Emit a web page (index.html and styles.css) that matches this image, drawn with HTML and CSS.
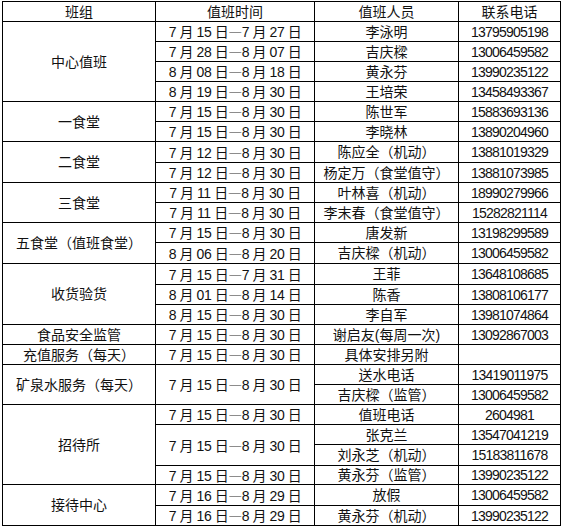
FILE: index.html
```html
<!DOCTYPE html>
<html lang="zh">
<head>
<meta charset="utf-8">
<title>值班表</title>
<link rel="stylesheet" href="styles.css">
</head>
<body>
<table class="duty">
<colgroup><col class="c1"><col class="c2"><col class="c3"><col class="c4"></colgroup>
<tr class="h20"><td>班组</td><td>值班时间</td><td>值班人员</td><td>联系电话</td></tr>
<tr class="h20"><td rowspan="4">中心值班</td><td class="d">7 月 15 日<span class="dash">—</span>7 月 27 日</td><td>李泳明</td><td class="p">13795905198</td></tr>
<tr class="h20"><td class="d">7 月 28 日<span class="dash">—</span>8 月 07 日</td><td>吉庆樑</td><td class="p">13006459582</td></tr>
<tr class="h20"><td class="d">8 月 08 日<span class="dash">—</span>8 月 18 日</td><td>黄永芬</td><td class="p">13990235122</td></tr>
<tr class="h20"><td class="d">8 月 19 日<span class="dash">—</span>8 月 30 日</td><td>王培荣</td><td class="p">13458493367</td></tr>
<tr class="h20"><td rowspan="2">一食堂</td><td class="d">7 月 15 日<span class="dash">—</span>8 月 30 日</td><td>陈世军</td><td class="p">15883693136</td></tr>
<tr class="h20"><td class="d">7 月 15 日<span class="dash">—</span>8 月 30 日</td><td>李晓林</td><td class="p">13890204960</td></tr>
<tr class="h21"><td rowspan="2">二食堂</td><td class="d">7 月 12 日<span class="dash">—</span>8 月 30 日</td><td>陈应全（机动）</td><td class="p">13881019329</td></tr>
<tr class="h20"><td class="d">7 月 12 日<span class="dash">—</span>8 月 30 日</td><td>杨定万（食堂值守）</td><td class="p">13881073985</td></tr>
<tr class="h20"><td rowspan="2">三食堂</td><td class="d">7 月 11 日<span class="dash">—</span>8 月 30 日</td><td>叶林喜（机动）</td><td class="p">18990279966</td></tr>
<tr class="h20"><td class="d">7 月 11 日<span class="dash">—</span>8 月 30 日</td><td>李末春（食堂值守）</td><td class="p">15282821114</td></tr>
<tr class="h20"><td rowspan="2">五食堂（值班食堂）</td><td class="d">7 月 15 日<span class="dash">—</span>8 月 30 日</td><td>唐发新</td><td class="p">13198299589</td></tr>
<tr class="h21"><td class="d">8 月 06 日<span class="dash">—</span>8 月 20 日</td><td>吉庆樑（机动）</td><td class="p">13006459582</td></tr>
<tr class="h21"><td rowspan="3">收货验货</td><td class="d">7 月 15 日<span class="dash">—</span>7 月 31 日</td><td>王菲</td><td class="p">13648108685</td></tr>
<tr class="h20"><td class="d">8 月 01 日<span class="dash">—</span>8 月 14 日</td><td>陈香</td><td class="p">13808106177</td></tr>
<tr class="h20"><td class="d">8 月 15 日<span class="dash">—</span>8 月 30 日</td><td>李自军</td><td class="p">13981074864</td></tr>
<tr class="h20"><td>食品安全监管</td><td class="d">7 月 15 日<span class="dash">—</span>8 月 30 日</td><td>谢启友(每周一次)</td><td class="p">13092867003</td></tr>
<tr class="h20"><td>充值服务（每天）</td><td class="d">7 月 15 日<span class="dash">—</span>8 月 30 日</td><td>具体安排另附</td><td class="p"></td></tr>
<tr class="h20"><td rowspan="2">矿泉水服务（每天）</td><td rowspan="2" class="d">7 月 15 日<span class="dash">—</span>8 月 30 日</td><td>送水电话</td><td class="p">13419011975</td></tr>
<tr class="h20"><td>吉庆樑（监管）</td><td class="p">13006459582</td></tr>
<tr class="h20"><td rowspan="4">招待所</td><td class="d">7 月 15 日<span class="dash">—</span>8 月 30 日</td><td>值班电话</td><td class="p">2604981</td></tr>
<tr class="h20"><td rowspan="2" class="d">7 月 15 日<span class="dash">—</span>8 月 30 日</td><td>张克兰</td><td class="p">13547041219</td></tr>
<tr class="h21"><td>刘永芝（机动）</td><td class="p">15183811678</td></tr>
<tr class="h19"><td class="d">7 月 15 日<span class="dash">—</span>8 月 30 日</td><td>黄永芬（监管）</td><td class="p">13990235122</td></tr>
<tr class="h21"><td rowspan="2">接待中心</td><td class="d">7 月 16 日<span class="dash">—</span>8 月 29 日</td><td>放假</td><td class="p">13006459582</td></tr>
<tr class="h20"><td class="d">7 月 16 日<span class="dash">—</span>8 月 29 日</td><td>黄永芬（机动）</td><td class="p">13990235122</td></tr>
</table>
</body>
</html>
```

FILE: styles.css
```css
html, body {
  margin: 0;
  padding: 0;
  background: #fff;
}

.duty {
  margin: 1px 0 0 2px;
  border-collapse: collapse;
  table-layout: fixed;
  width: 558px;
  font-family: "Liberation Sans", "Noto Sans CJK SC", sans-serif;
  font-size: 14px;
  color: #111;
}

.c1 { width: 153px; }
.c2 { width: 159px; }
.c3 { width: 144px; }
.c4 { width: 102px; }

.duty td {
  border: 1px solid #000;
  padding: 0;
  text-align: center;
  vertical-align: middle;
  line-height: 16px;
  white-space: nowrap;
  overflow: hidden;
}

.h19 { height: 19px; }
.h20 { height: 20px; }
.h21 { height: 21px; }

.duty td.d { letter-spacing: -0.45px; }
.duty td.p { letter-spacing: -0.8px; }

.dash {
  font-family: "Noto Sans CJK SC", sans-serif;
  font-weight: 300;
  color: #333;
}
```
